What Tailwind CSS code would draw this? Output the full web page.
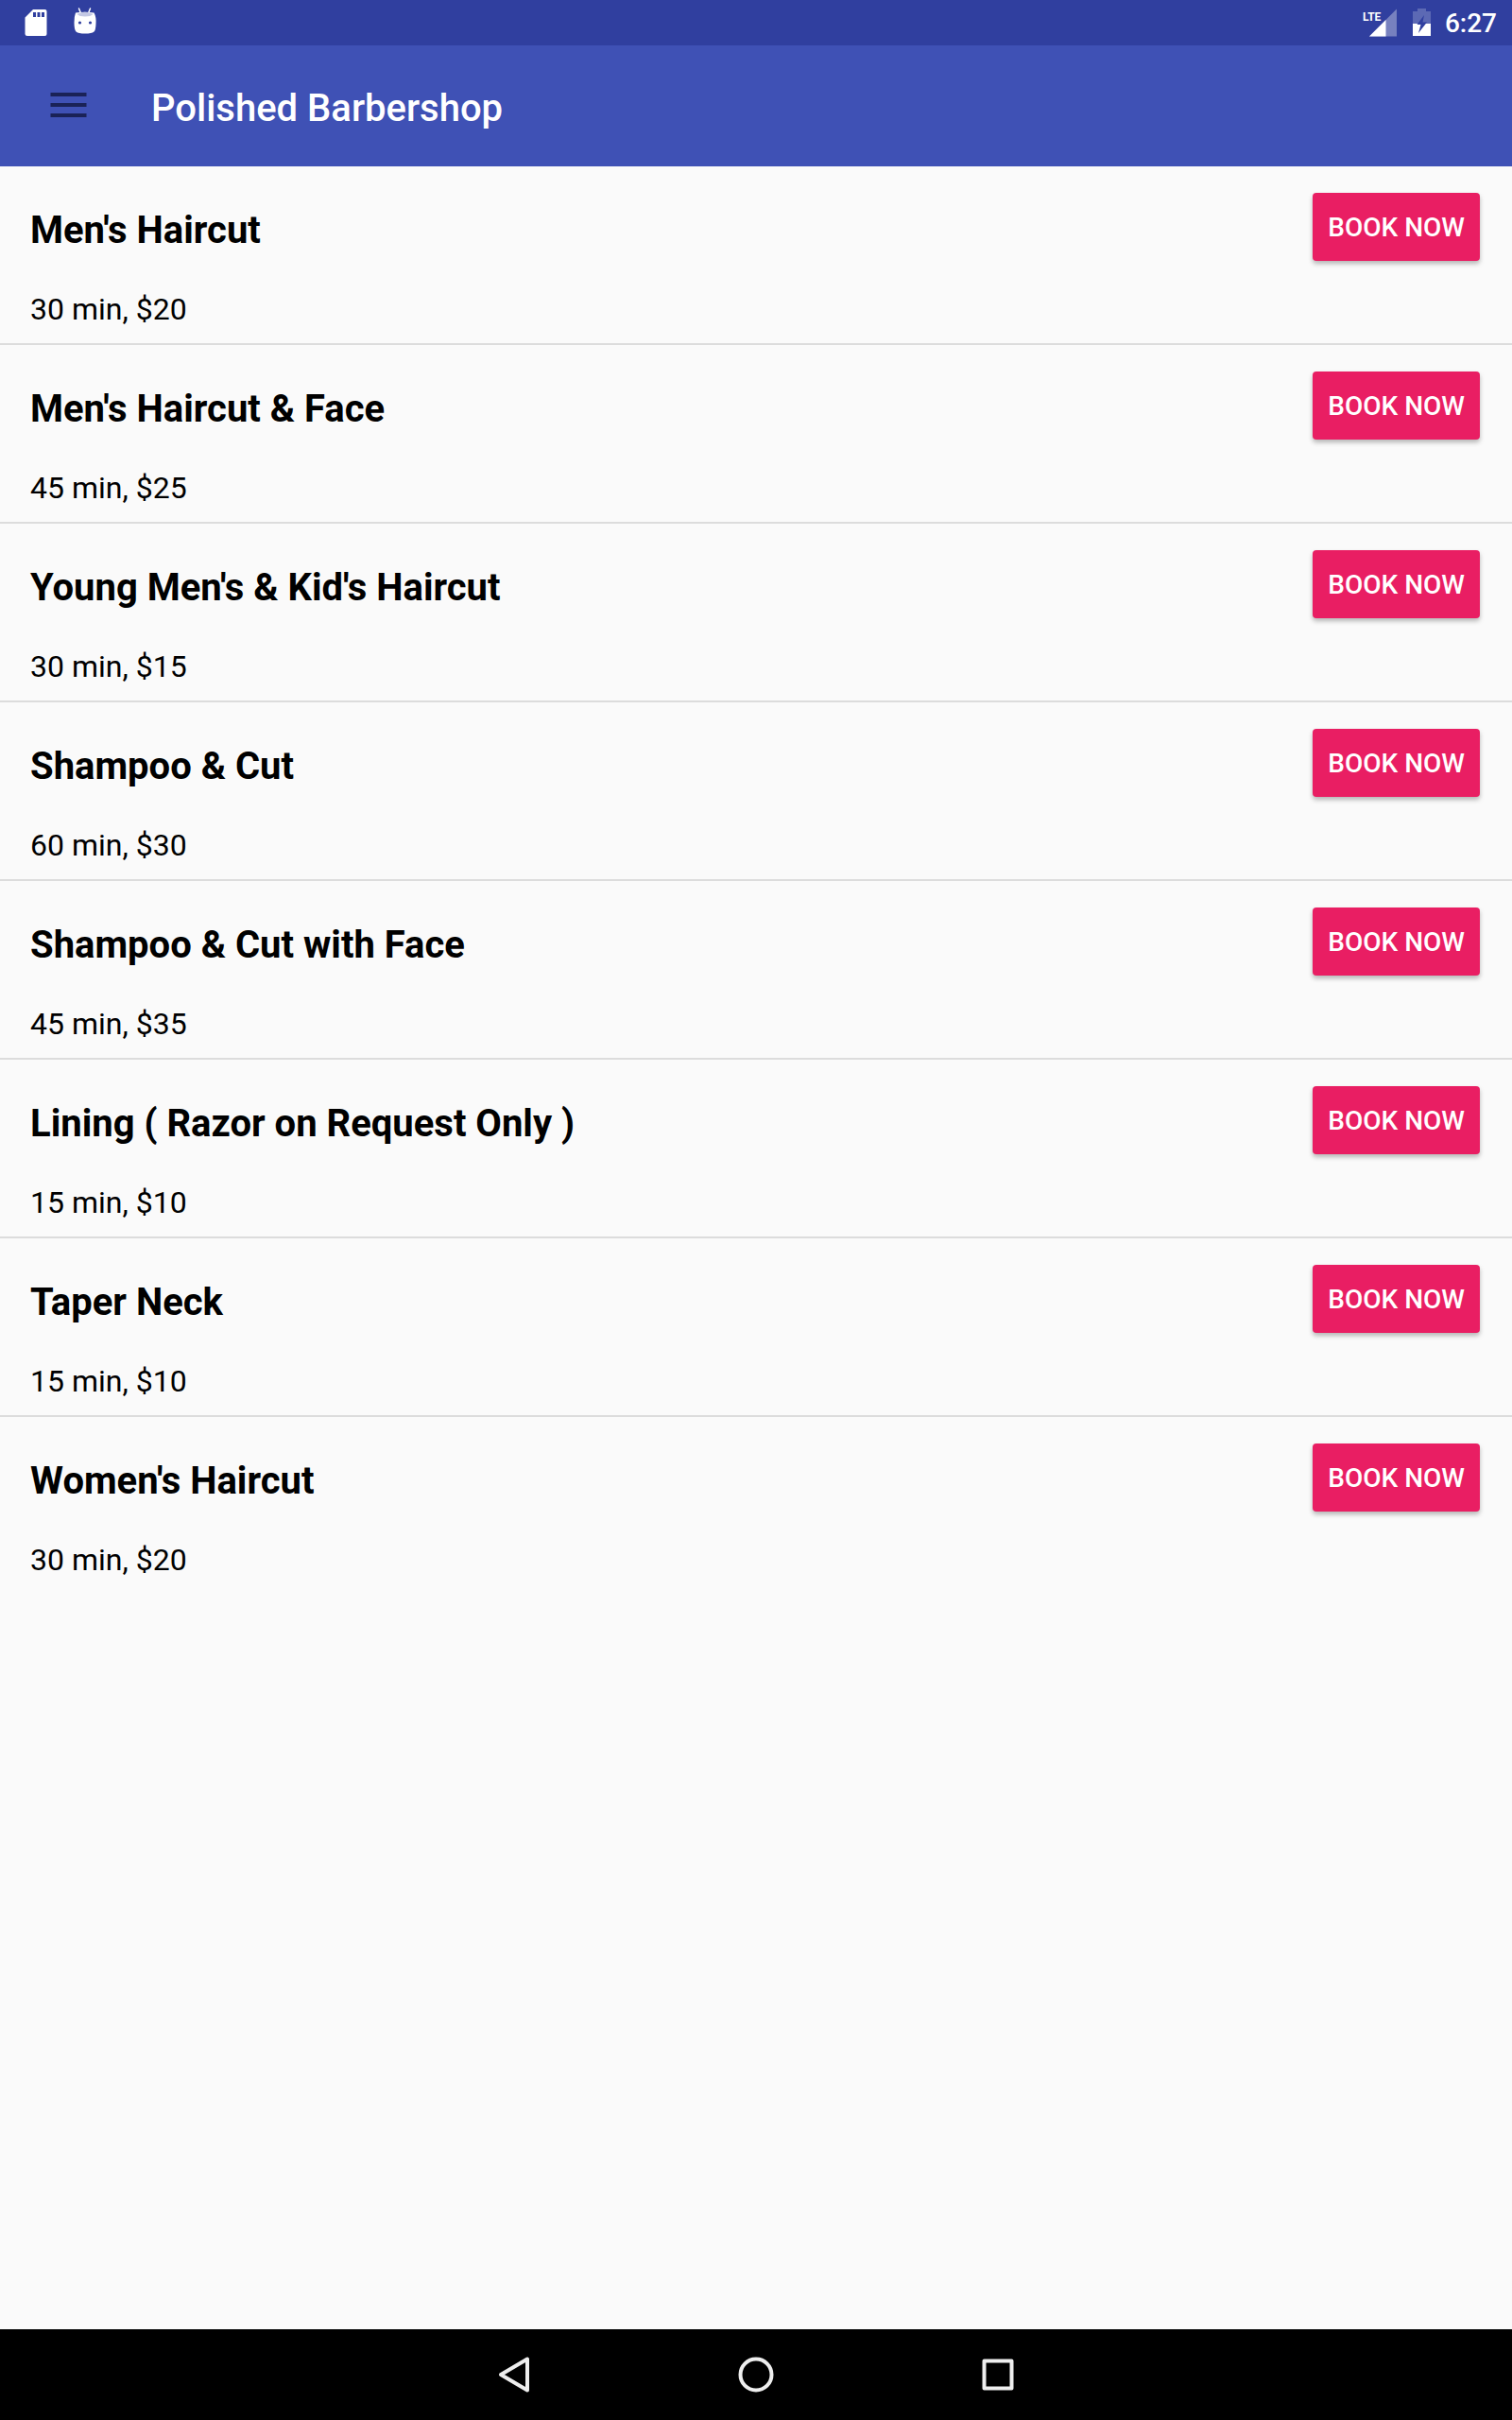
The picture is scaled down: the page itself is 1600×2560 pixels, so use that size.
<!DOCTYPE html>
<html lang="en">
<head>
<meta charset="utf-8">
<meta name="viewport" content="width=device-width, initial-scale=1">
<title>Polished Barbershop</title>
<script src="https://cdn.jsdelivr.net/npm/@tailwindcss/browser@4"></script>
</head>
<body class="flex min-h-screen flex-col bg-[#fafafa] font-['Roboto',sans-serif] text-black">
<div class="flex h-12 items-center justify-between bg-[#303f9f] px-4 text-white">
  <div class="flex items-center gap-1">
    <svg class="h-12 w-12" viewBox="0 0 48 48" aria-hidden="true"><path fill="#fff" fill-rule="evenodd" d="M19 10H31.500Q33.500 10 33.500 12V36Q33.500 38 31.500 38H13Q10.500 38 10.500 36V18.500ZM19 13V18H22V13ZM23.500 13V18H26.500V13ZM28 13V18H31V13Z"/></svg>
    <svg class="h-12 w-12" viewBox="0 0 48 48" aria-hidden="true"><path d="M15.500 9L17.500 14M27.500 9L25.500 14" stroke="#fff" stroke-width="1.500" stroke-linecap="round"/><path fill="#fff" d="M12 13.500Q21.500 12 31.500 13.500Q34 18 33.500 25Q33.300 32 31.500 33.500Q29 35.500 22 35.500Q15 35.500 12.500 33.500Q10.500 31.500 10.500 24Q10.300 18 12 13.500Z"/><path fill="#c3c8e4" d="M13.500 15Q22 10.500 30.500 15Q28 17.500 22 17.500Q16 17.500 13.500 15Z"/><circle cx="16.500" cy="24" r="1.600" fill="#303f9f"/><circle cx="27.500" cy="24" r="1.600" fill="#303f9f"/></svg>
  </div>
  <div class="flex items-center">
    <svg class="h-12 w-10" viewBox="0 0 40 48" role="img" aria-label="LTE signal"><path fill="#7781bf" d="M37 9.500V38.500H8Z"/><path fill="#fff" d="M25.500 21V38.500H8Z"/><text x="1" y="22" fill="#fff" font-size="12" font-weight="700">LTE</text></svg>
    <svg class="ml-2 h-12 w-10" viewBox="0 0 40 48" role="img" aria-label="Battery charging"><path fill="#5c69b4" d="M11 9H20V12H25V25H6V12H11Z"/><path fill="#fff" d="M6 25H25V38H6Z"/><path fill="#303f9f" d="M18 16L10.500 26H14.500L12 35L21 23.500H16.500Z"/></svg>
    <span class="pt-[2px] text-[28px] leading-8 font-medium">6:27</span>
  </div>
</div>
<header class="flex h-32 items-center bg-[#3f51b5] pt-[6px] pl-12 text-white">
  <button type="button" aria-label="Open menu" class="mr-16 flex h-12 w-12 items-center justify-center">
    <svg class="h-12 w-12" viewBox="0 0 48 48" aria-hidden="true"><path fill="#1a2257" d="M5.500 7H43.500V11H5.500ZM5.500 18H43.500V22H5.500ZM5.500 29H43.500V33H5.500Z"/></svg>
  </button>
  <h1 class="text-[40px] leading-12 font-medium">Polished Barbershop</h1>
</header>
<main class="flex-1">
  <ul id="services" class="divide-y-2 divide-[#dcdcdc]"></ul>
</main>
<nav aria-label="System" class="flex h-24 justify-center bg-black">
  <button type="button" aria-label="Back" class="flex w-64 items-center justify-center"><svg class="h-12 w-12" viewBox="0 0 48 48" fill="none" stroke="#eee" stroke-width="4" stroke-linejoin="round"><path d="M10 24L38 7.500V40.500Z"/></svg></button>
  <button type="button" aria-label="Home" class="flex w-64 items-center justify-center"><svg class="h-12 w-12" viewBox="0 0 48 48" fill="none" stroke="#eee" stroke-width="4"><circle cx="24" cy="24" r="16.500"/></svg></button>
  <button type="button" aria-label="Recent apps" class="flex w-64 items-center justify-center"><svg class="h-12 w-12" viewBox="0 0 48 48" fill="none" stroke="#eee" stroke-width="4" stroke-linejoin="round"><path d="M9.500 9.500H38.500V38.500H9.500Z"/></svg></button>
</nav>
<template id="service-row">
  <li class="flex items-start justify-between pt-7 pr-[34px] pb-[17px] pl-8">
    <div class="flex flex-col gap-6">
      <h2 class="text-[40px] leading-20 font-bold"></h2>
      <p class="text-[32px] leading-[38px]"></p>
    </div>
    <button type="button" class="h-18 rounded bg-[#e91e63] px-4 pt-[2px] text-[28px] leading-8 font-medium text-white shadow-[0_3px_5px_rgba(0,0,0,0.28)]">BOOK NOW</button>
  </li>
</template>
<script>
const services = [
  ["Men's Haircut", "30 min, $20"],
  ["Men's Haircut & Face", "45 min, $25"],
  ["Young Men's & Kid's Haircut", "30 min, $15"],
  ["Shampoo & Cut", "60 min, $30"],
  ["Shampoo & Cut with Face", "45 min, $35"],
  ["Lining ( Razor on Request Only )", "15 min, $10"],
  ["Taper Neck", "15 min, $10"],
  ["Women's Haircut", "30 min, $20"],
];
const list = document.getElementById("services");
const row = document.getElementById("service-row");
for (const [name, detail] of services) {
  const item = row.content.cloneNode(true);
  item.querySelector("h2").textContent = name;
  item.querySelector("p").textContent = detail;
  list.append(item);
}
</script>
</body>
</html>
